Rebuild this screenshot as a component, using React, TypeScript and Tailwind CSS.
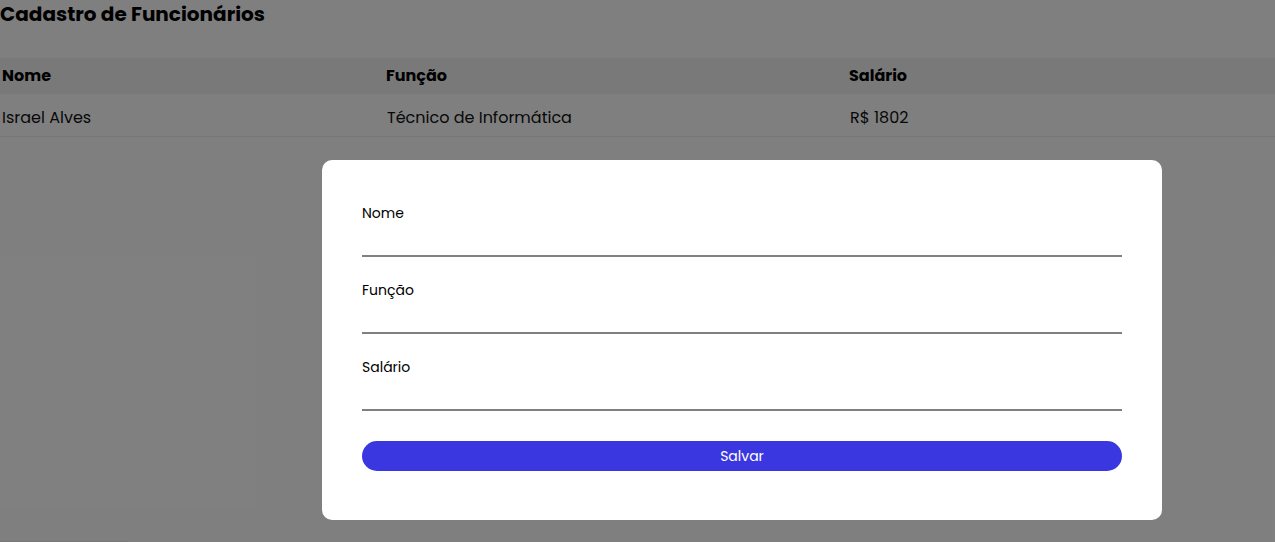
import React from "react";

export default function App() {
  const font = "font-['Poppins','Inter',sans-serif]";
  const fields = ["Nome", "Função", "Salário"];
  return (
    <div className={`relative w-[1275px] h-[542px] overflow-hidden bg-white ${font}`}>
      <h1 className="text-[20px] leading-[26px] font-bold text-black pt-[1px]">Cadastro de Funcionários</h1>
      <table className="w-full mt-[31px] border-collapse text-left">
        <thead>
          <tr className="bg-[#f3f3f3] h-[36px]">
            <th className="w-[384px] pl-[2px] text-[16px] font-bold text-black">Nome</th>
            <th className="w-[463px] pl-[2px] text-[16px] font-bold text-black">Função</th>
            <th className="pl-[2px] text-[16px] font-bold text-black">Salário</th>
          </tr>
        </thead>
        <tbody>
          <tr className="h-[42px] border-b border-[#eeeeee]">
            <td className="pl-[2px] pt-[6px] text-[16px] text-[#111]">Israel Alves</td>
            <td className="pl-[3px] pt-[6px] text-[16px] text-[#111]">Técnico de Informática</td>
            <td className="pl-[3px] pt-[6px] text-[16px] text-[#111]">R$ 1802</td>
          </tr>
        </tbody>
      </table>
      <div className="absolute left-0 bottom-0 w-[128px] h-px bg-[#eeeeee]" />
      <div className="absolute inset-0 bg-black/50">
        <div className="absolute left-[322px] top-[160px] w-[840px] h-[360px] bg-white rounded-[10px] px-[40px] pt-[44px]">
          <div className="flex flex-col gap-[24px]">
            {fields.map((l) => (
              <div key={l}>
                <label className="block text-[14px] leading-[18px] text-black">{l}</label>
                <div className="h-[35px] border-b-2 border-[#808080]" />
              </div>
            ))}
          </div>
          <button className="block mt-[30px] w-full h-[30px] rounded-full bg-[#3a37e0] text-white text-[14px]">Salvar</button>
        </div>
      </div>
    </div>
  );
}
